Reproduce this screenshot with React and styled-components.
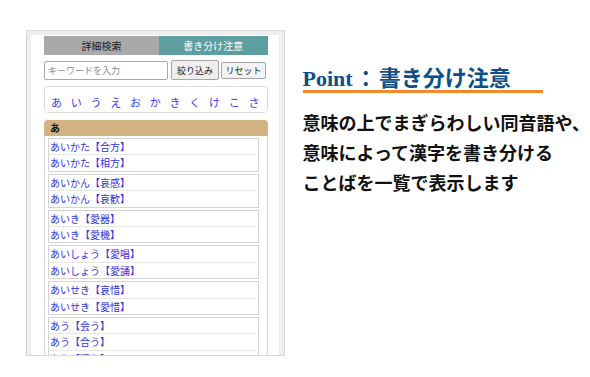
import React from "react";
import styled, { createGlobalStyle } from "styled-components";

const kanaList = ["あ", "い", "う", "え", "お", "か", "き", "く", "け", "こ", "さ"];

const wordGroups = [
  { yomi: "あいかた", words: ["合方", "相方"] },
  { yomi: "あいかん", words: ["哀感", "哀歓"] },
  { yomi: "あいき", words: ["愛器", "愛機"] },
  { yomi: "あいしょう", words: ["愛唱", "愛誦"] },
  { yomi: "あいせき", words: ["哀惜", "愛惜"] },
  { yomi: "あう", words: ["会う", "合う", "遭う"] }
];

const GlobalStyle = createGlobalStyle`
  html, body {
    margin: 0;
    padding: 0;
    background: #fff;
  }
  body {
    font-family: "Noto Sans CJK JP", "Noto Sans", sans-serif;
  }
`;

export default function App() {
  return (
    <>
      <GlobalStyle />
      <Page>
        <Phone>
          <Screen>
            <Tabs>
              <Tab>詳細検索</Tab>
              <Tab active>書き分け注意</Tab>
            </Tabs>
            <SearchRow>
              <SearchInput placeholder="キーワードを入力" />
              <FilterButton>絞り込み</FilterButton>
              <ResetButton>リセット</ResetButton>
            </SearchRow>
            <KanaNav>
              {kanaList.map(kana => (
                <Kana key={kana}>{kana}</Kana>
              ))}
            </KanaNav>
            <Section>
              <SectionHeader>あ</SectionHeader>
              <SectionBody>
                {wordGroups.map(group => (
                  <Group key={group.yomi}>
                    {group.words.map(word => (
                      <Row key={word}>{group.yomi}【{word}】</Row>
                    ))}
                  </Group>
                ))}
              </SectionBody>
            </Section>
          </Screen>
        </Phone>
        <Info>
          <Title>
            Point<Colon>：</Colon>書き分け注意
          </Title>
          <Lead>
            意味の上でまぎらわしい同音語や、<br />
            意味によって漢字を書き分ける<br />
            ことばを一覧で表示します
          </Lead>
        </Info>
      </Page>
    </>
  );
}

const Page = styled.div`
  display: flex;
  align-items: flex-start;
  height: 377px;
  box-sizing: border-box;
  padding: 30px 0 0 26px;
  overflow: hidden;
`;

const Phone = styled.div`
  display: flex;
  width: 266px;
  height: 326px;
  box-sizing: border-box;
  padding: 4px 5px 0 4px;
  background: #eeeeee;
  border: 1px solid #d8d8d8;
`;

const Screen = styled.div`
  flex: 1;
  background: #fff;
  padding: 1px 11px 0 13px;
  overflow: hidden;
`;

const Tabs = styled.div`
  display: grid;
  grid-template-columns: 115px 1fr;
  height: 19px;
`;

const Tab = styled.div`
  display: flex;
  align-items: center;
  justify-content: center;
  font-size: 10px;
  background: ${props => (props.active ? "#5f9ea0" : "#a9a9a9")};
  color: ${props => (props.active ? "#fff" : "#222")};
`;

const SearchRow = styled.div`
  display: flex;
  align-items: center;
  height: 20px;
  margin-top: 5px;
`;

const SearchInput = styled.input`
  width: 124px;
  height: 19px;
  box-sizing: border-box;
  padding: 0 3px;
  border: 1px solid #aaa;
  border-radius: 2px;
  font-family: "Noto Sans CJK JP", sans-serif;
  font-size: 9px;
  outline: none;

  &::placeholder {
    color: #8a8a8a;
  }
`;

const FilterButton = styled.button`
  width: 48px;
  height: 20px;
  margin-left: 3px;
  padding: 0;
  border: 1px solid #a5a5a5;
  border-radius: 2px;
  background: #eeeeee;
  color: #222;
  font-family: "Noto Sans CJK JP", sans-serif;
  font-size: 9px;
`;

const ResetButton = styled(FilterButton)`
  width: 45px;
  height: 17px;
  margin-left: 2px;
  background: #f3f3f3;
`;

const KanaNav = styled.div`
  display: flex;
  justify-content: space-between;
  align-items: flex-end;
  height: 27px;
  box-sizing: border-box;
  margin-top: 6px;
  padding: 0 7px 3px 6px;
  border: 1px solid #dcdcdc;
  border-radius: 4px;
`;

const Kana = styled.span`
  font-size: 11px;
  line-height: 14px;
  color: #3a3af0;
`;

const Section = styled.div`
  margin-top: 7px;
`;

const SectionHeader = styled.div`
  height: 16px;
  line-height: 16px;
  padding-left: 6px;
  background: #d4b383;
  border-radius: 4px 4px 0 0;
  font-size: 10px;
  font-weight: bold;
  color: #111;
`;

const SectionBody = styled.div`
  padding: 2px 8px 0 3px;
  border-left: 1px solid #d8d8d8;
  border-right: 1px solid #d8d8d8;
`;

const Group = styled.div`
  margin-bottom: 2px;
  border: 1px solid #d4d4d4;
`;

const Row = styled.div`
  height: 15.4px;
  line-height: 15.4px;
  padding-left: 1px;
  font-size: 10px;
  color: #3232e0;
  white-space: nowrap;

  & + & {
    border-top: 1px solid #e8e8e8;
  }
`;

const Info = styled.div`
  margin-left: 18px;
  padding-top: 38px;
`;

const Title = styled.div`
  width: 240px;
  font-family: "Liberation Serif", "Noto Sans CJK JP", serif;
  font-size: 22px;
  font-weight: bold;
  line-height: 22px;
  color: #0d4f86;
  border-bottom: 3px solid #f28a2c;
  white-space: nowrap;
`;

const Colon = styled.span`
  margin: 0 2px 0 2px;
`;

const Lead = styled.p`
  margin: 14px 0 0;
  font-family: "Noto Sans CJK JP", sans-serif;
  font-size: 18px;
  font-weight: bold;
  line-height: 30px;
  color: #111;
  white-space: nowrap;
`;
